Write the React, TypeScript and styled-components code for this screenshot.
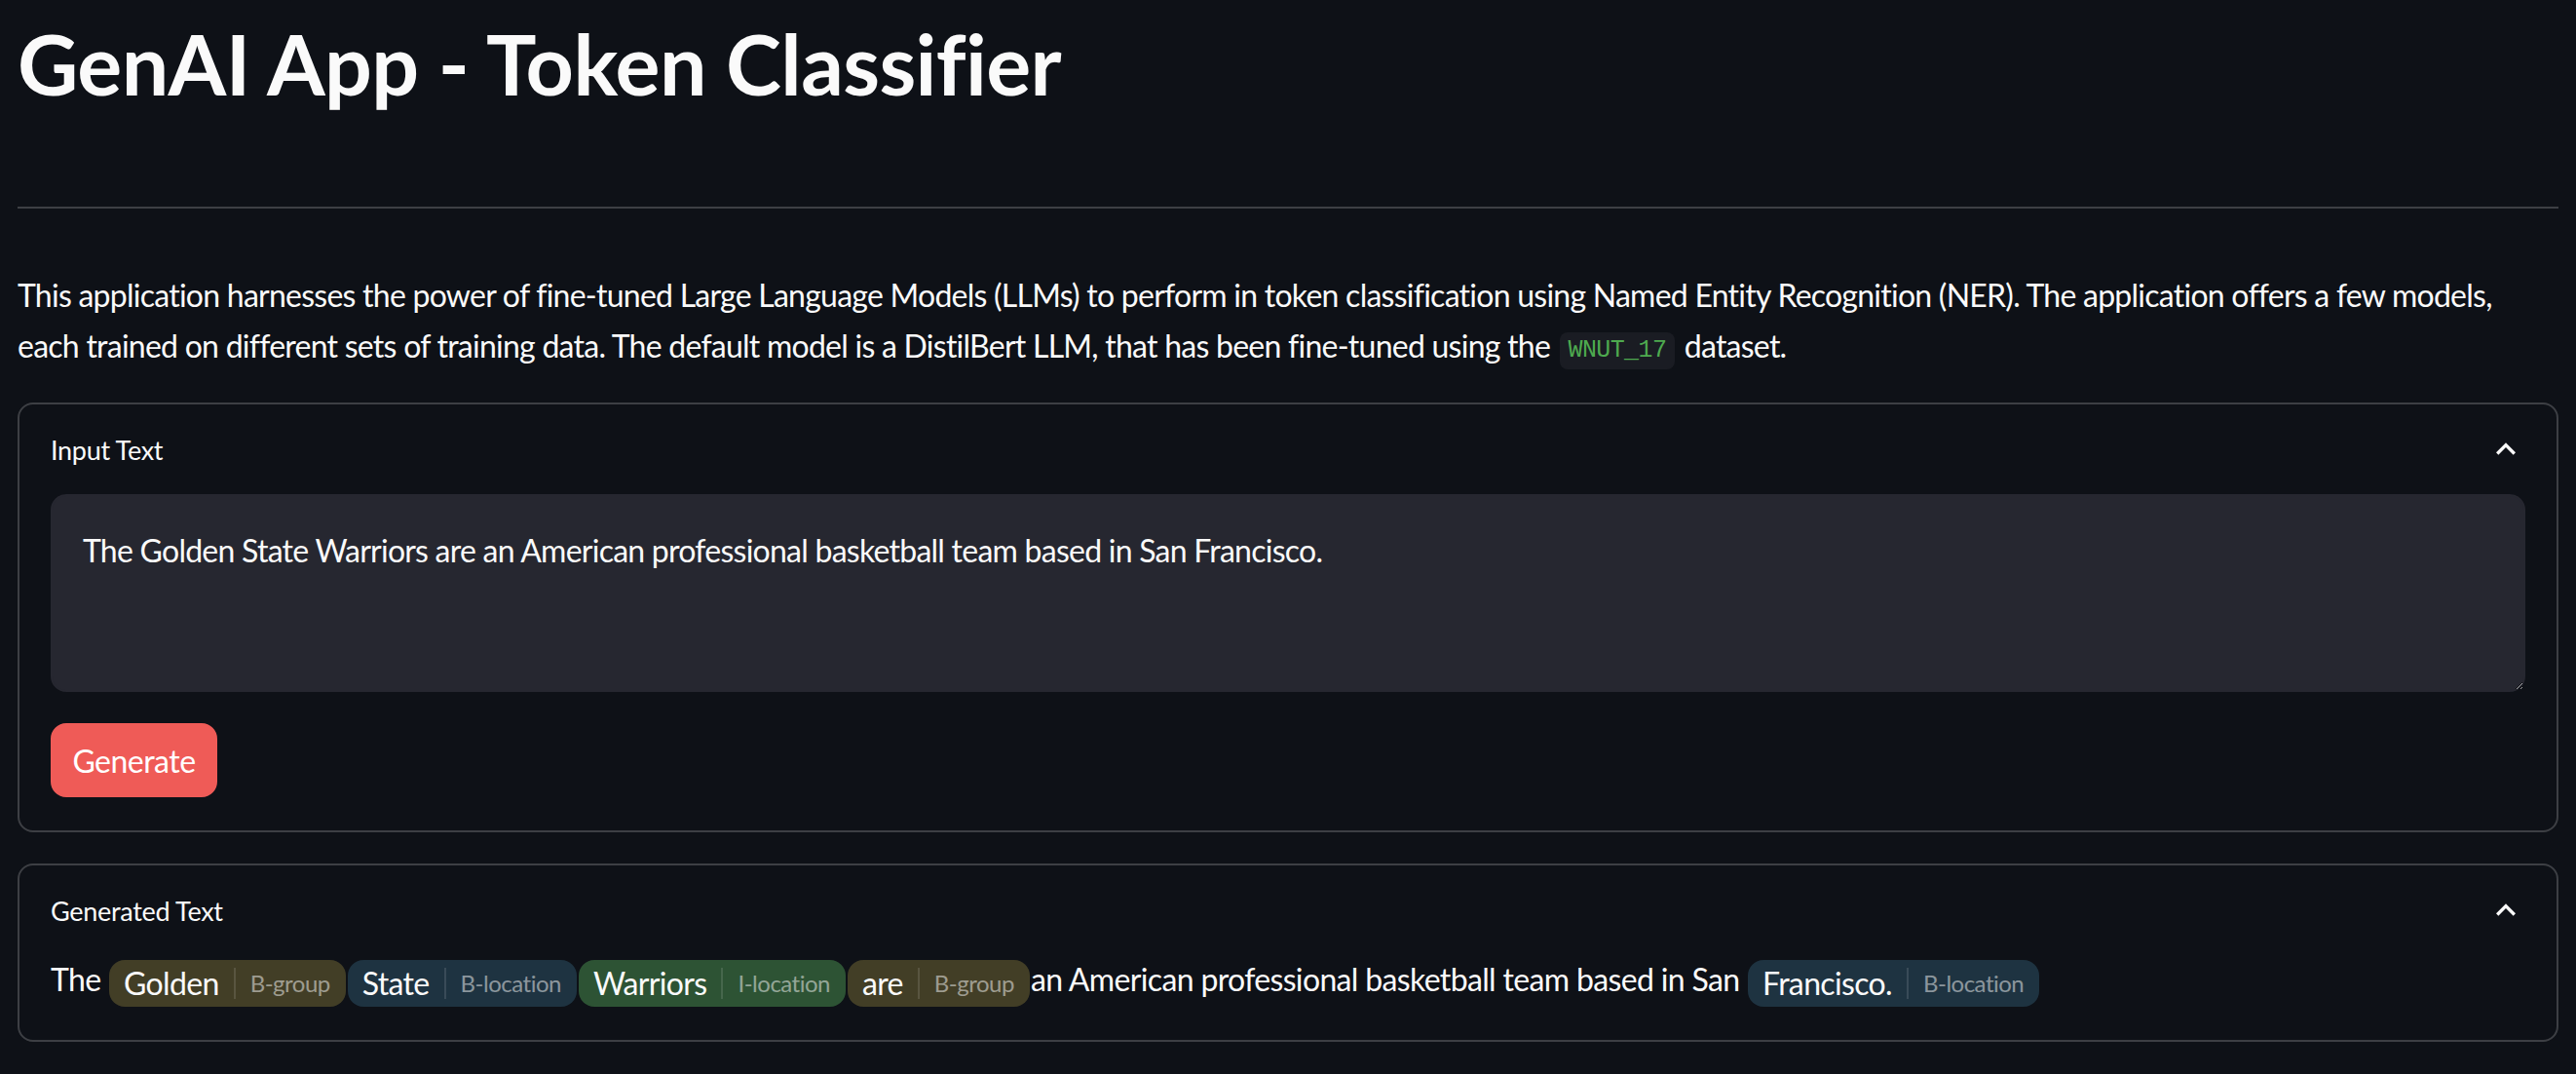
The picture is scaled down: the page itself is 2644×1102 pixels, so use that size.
import React from "react";
import styled, { createGlobalStyle } from "styled-components";

const Global = createGlobalStyle`
  html, body {
    margin: 0;
    padding: 0;
    background: #0e1117;
    color: #fafafa;
    font-family: Lato, "Liberation Sans", sans-serif;
  }
  * { box-sizing: border-box; }
`;

const Page = styled.main`
  padding: 0 18px;
  display: flex;
  flex-direction: column;
`;

const Title = styled.h1`
  margin: 0;
  padding-top: 13px;
  font-size: 86px;
  line-height: 1.2;
  font-weight: 700;
  letter-spacing: -0.6px;
  color: #fafafa;
`;

const Divider = styled.hr`
  border: none;
  height: 2px;
  margin: 96px 0 0;
  background: rgba(250, 250, 250, 0.2);
`;

const Paragraph = styled.p`
  margin: 63px 0 0;
  font-size: 32px;
  line-height: 52px;
  letter-spacing: -0.75px;
`;

const Code = styled.code`
  display: inline-block;
  font-family: "Liberation Mono", monospace;
  font-size: 25px;
  line-height: 28px;
  color: #4eaa4f;
  background: #1a1c23;
  border-radius: 8px;
  padding: 5px 9px;
  margin: 0 2px;
  letter-spacing: -0.6px;
  vertical-align: 1px;
`;

const Stack = styled.div`
  display: flex;
  flex-direction: column;
  gap: 32px;
  margin-top: 32px;
`;

const Expander = styled.section`
  border: 2px solid rgba(250, 250, 250, 0.2);
  border-radius: 16px;
`;

const ExpanderHeader = styled.div`
  height: 92px;
  padding: 0 32px;
  display: flex;
  align-items: center;
  justify-content: space-between;
`;

const ExpanderLabel = styled.span`
  font-size: 27px;
  letter-spacing: -0.3px;
`;

const ExpanderBody = styled.div`
  padding: 0 32px 34px;
  display: flex;
  flex-direction: column;
  align-items: flex-start;
  gap: 32px;
`;

const TextArea = styled.textarea`
  width: 100%;
  height: 203px;
  resize: vertical;
  background: #262730;
  color: #fafafa;
  border: 2px solid #262730;
  border-radius: 16px;
  padding: 30px 31px;
  font-family: Lato, "Liberation Sans", sans-serif;
  font-size: 32px;
  line-height: 51px;
  letter-spacing: -0.75px;
  outline: none;
`;

const Button = styled.button`
  width: 171px;
  height: 76px;
  border: 2px solid #ef5b57;
  border-radius: 16px;
  background: #ef5b57;
  color: #ffffff;
  font-family: Lato, "Liberation Sans", sans-serif;
  font-size: 32px;
  letter-spacing: -0.5px;
  padding: 0;
`;

const AnnotatedRow = styled.div`
  font-size: 32px;
  line-height: 49px;
  white-space: pre;
  letter-spacing: -0.65px;
`;

const pillColors: Record<string, string> = {
  olive: "#423e26",
  blue: "#1e3341",
  green: "#2d5334",
};

const Pill = styled.span<{ $tone: string }>`
  display: inline-flex;
  align-items: center;
  height: 48px;
  padding: 0 16px 0 15px;
  margin: 0 1px;
  border-radius: 16px;
  background: ${(p) => pillColors[p.$tone]};
  vertical-align: middle;
  line-height: 1;
`;

const PillLabel = styled.span`
  font-size: 24px;
  letter-spacing: -0.5px;
  margin-left: 15px;
  padding-left: 15px;
  height: 32px;
  display: inline-flex;
  align-items: center;
  border-left: 2px solid rgba(255, 255, 255, 0.12);
  color: rgba(250, 250, 250, 0.5);
`;

const Chevron = () => (
  <svg width="40" height="40" viewBox="0 0 24 24" fill="#fafafa">
    <path d="M12 8l-6 6 1.41 1.41L12 10.83l4.59 4.58L18 14z" />
  </svg>
);

const Token = ({ word, label, tone }: { word: string; label: string; tone: string }) => (
  <Pill $tone={tone}>
    {word}
    <PillLabel>{label}</PillLabel>
  </Pill>
);

export default function App() {
  return (
    <>
      <Global />
      <Page>
        <Title>GenAI App - Token Classifier</Title>
        <Divider />
        <Paragraph>
          This application harnesses the power of fine-tuned Large Language Models (LLMs) to perform in
          token classification using Named Entity Recognition (NER). The application offers a few models,
          each trained on different sets of training data. The default model is a DistilBert LLM, that has
          been fine-tuned using the <Code>WNUT_17</Code> dataset.
        </Paragraph>
        <Stack>
          <Expander>
            <ExpanderHeader>
              <ExpanderLabel>Input Text</ExpanderLabel>
              <Chevron />
            </ExpanderHeader>
            <ExpanderBody>
              <TextArea defaultValue="The Golden State Warriors are an American professional basketball team based in San Francisco." />
              <Button>Generate</Button>
            </ExpanderBody>
          </Expander>
          <Expander>
            <ExpanderHeader>
              <ExpanderLabel>Generated Text</ExpanderLabel>
              <Chevron />
            </ExpanderHeader>
            <ExpanderBody>
              <AnnotatedRow>
                {"The "}
                <Token word="Golden" label="B-group" tone="olive" />
                <Token word="State" label="B-location" tone="blue" />
                <Token word="Warriors" label="I-location" tone="green" />
                <Token word="are" label="B-group" tone="olive" />
                {"an American professional basketball team based in San "}
                <Token word="Francisco." label="B-location" tone="blue" />
              </AnnotatedRow>
            </ExpanderBody>
          </Expander>
        </Stack>
      </Page>
    </>
  );
}
